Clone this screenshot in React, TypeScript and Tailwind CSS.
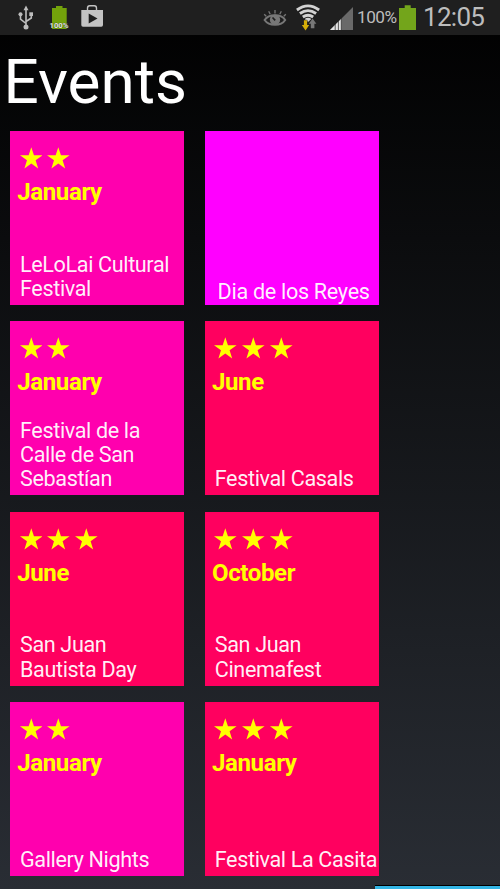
type EventTile = { title: string[]; month?: string; stars: number; color: string };

const PINK = "bg-[#ff00ae]";
const RED = "bg-[#ff005f]";

const events: EventTile[] = [
  { title: ["LeLoLai Cultural", "Festival"], month: "January", stars: 2, color: PINK },
  { title: ["Dia de los Reyes"], stars: 0, color: "bg-[#ff00ff]" },
  { title: ["Festival de la", "Calle de San", "Sebastían"], month: "January", stars: 2, color: PINK },
  { title: ["Festival Casals"], month: "June", stars: 3, color: RED },
  { title: ["San Juan", "Bautista Day"], month: "June", stars: 3, color: RED },
  { title: ["San Juan", "Cinemafest"], month: "October", stars: 3, color: RED },
  { title: ["Gallery Nights"], month: "January", stars: 2, color: PINK },
  { title: ["Festival La Casita"], month: "January", stars: 3, color: RED },
];

function Star() {
  return (
    <svg className="h-[22px] w-[22.6px]" viewBox="0 0 23 22" fill="#ffff00">
      <path d="M11.5 0 14.2 8.2H23L15.9 13.3 18.5 21.6 11.5 16.6 4.5 21.6 7.1 13.3 0 8.2H8.8Z" />
    </svg>
  );
}

function Tile({ event }: { event: EventTile }) {
  return (
    <div className={`flex h-[174.2px] w-[174.2px] flex-col ${event.color}`}>
      {event.month && (
        <>
          <div className="mt-[16px] flex h-[22px] gap-[5.2px] pl-[9.8px]">
            {Array.from({ length: event.stars }, (_, i) => (
              <Star key={i} />
            ))}
          </div>
          <div className="mt-[9px] pl-[7.4px] text-[24px] leading-[28px] font-bold tracking-[-0.35px] text-[#ffff00]">
            {event.month}
          </div>
        </>
      )}
      <div
        className={`mt-auto text-[21.6px] leading-[24.3px] whitespace-nowrap text-white/95 ${
          event.month ? "pb-[3.7px] pl-[10.2px] tracking-[-0.37px]" : "pb-[0.5px] pl-[13px] tracking-[-0.3px]"
        }`}
      >
        {event.title.map((line) => (
          <div key={line}>{line}</div>
        ))}
      </div>
    </div>
  );
}

function UsbIcon() {
  return (
    <svg className="h-[35px] w-[18px]" viewBox="17 0 18 35" fill="none" stroke="#bdbdbd" strokeWidth="1.6">
      <path d="M26 9V27M26 23.5 20.5 19V15M26 21.5 31.3 18V14" />
      <path d="M26 5.5 28.5 10.3H23.5Z" fill="#bdbdbd" stroke="none" />
      <circle cx="26" cy="27" r="2.5" fill="#bdbdbd" stroke="none" />
      <circle cx="20.5" cy="14.3" r="2" fill="#bdbdbd" stroke="none" />
      <path d="M29.3 12.3H33V16H29.3Z" fill="#bdbdbd" stroke="none" />
    </svg>
  );
}

function ChargeIcon() {
  return (
    <svg className="ml-[13px] h-[35px] w-[22px]" viewBox="48 0 22 35">
      <path d="M56 6H62.5V8H66.7V29H52V8H56Z" fill="#73a20b" />
      <text x="59" y="28" textAnchor="middle" textLength="19" lengthAdjust="spacingAndGlyphs" fill="#e4e4e4" fontSize="8" fontWeight="700" stroke="#29380b" strokeWidth=".5" paintOrder="stroke">
        100%
      </text>
    </svg>
  );
}

function StoreIcon() {
  return (
    <svg className="ml-[10px] h-[35px] w-[24px]" viewBox="80 0 24 35">
      <path d="M87.5 10V8.2Q87.5 5.7 89.7 5.7H94.3Q96.5 5.7 96.5 8.2V10" fill="none" stroke="#c3c3c3" strokeWidth="1.4" />
      <path d="M81.3 10H103V25Q103 26.7 101.3 26.7H83Q81.3 26.7 81.3 25Z" fill="#c3c3c3" />
      <path d="M88.7 13.5V23.5L97.5 18.5Z" fill="#1f1f1f" />
    </svg>
  );
}

function EyeIcon() {
  return (
    <svg className="h-[35px] w-[24px]" viewBox="263 0 24 35" fill="none" stroke="#777">
      <path d="M264.6 20C269 13.8 281 13.8 285.2 20C281 26.4 269 26.4 264.6 20Z" strokeWidth="2" />
      <circle cx="275" cy="19.8" r="5.2" fill="#777" stroke="none" />
      <path d="M275.2 20.3 272.5 17.5" stroke="#202020" strokeWidth="1.7" />
      <path d="M275 10V13.5M268.7 11.3 270.2 14.2M281.3 11.3 279.8 14.2M264.2 14.2 266.2 16.3M285.8 14.2 283.8 16.3" strokeWidth="1.3" />
    </svg>
  );
}

function WifiIcon() {
  return (
    <svg className="ml-[8px] h-[35px] w-[26px]" viewBox="295 0 26 35" fill="none" stroke="#d2d2d2" strokeWidth="2.8">
      <path d="M296.9 10Q308 1.8 319.1 10M299.9 13.5Q308 7.7 316.1 13.5M302.8 17Q308 13.4 313.2 17" />
      <path d="M304.6 19Q308 16.6 311.4 19L308 22Z" fill="#d2d2d2" stroke="none" />
      <path d="M303.9 20.3H307.1V25H309.2L305.5 30.5 301.8 25H303.9Z" fill="#d5ae09" stroke="#1f1f1f" strokeWidth=".8" paintOrder="stroke" />
      <path d="M310.8 28.3V23.8H308.8L312.6 18.5 316.4 23.8H314.4V28.3Z" fill="#777" stroke="#1f1f1f" strokeWidth=".8" paintOrder="stroke" />
    </svg>
  );
}

function SignalIcon() {
  return (
    <svg className="ml-[9px] h-[35px] w-[24px]" viewBox="330 0 24 35">
      <path d="M330 30 353 7V30Z" fill="#696969" />
      <path d="M330 30 341.3 18.7V30Z" fill="#e3e3e3" />
      <path d="M335.2 24V30M338.4 21V30M341.3 18V30" stroke="#333" strokeWidth=".8" />
    </svg>
  );
}

function BatteryIcon() {
  return (
    <svg className="ml-[2px] h-[35px] w-[19px]" viewBox="398 0 19 35">
      <path d="M404.7 5.3H410.7V8H416V30H399V8H404.7Z" fill="#73a51b" />
    </svg>
  );
}

function StatusBar() {
  return (
    <header className="flex h-[35px] shrink-0 items-center bg-[#1f1f1f] pr-[15px] pl-[17px]">
      <UsbIcon />
      <ChargeIcon />
      <StoreIcon />
      <div className="ml-auto flex items-center text-[#bdbdbd]">
        <EyeIcon />
        <WifiIcon />
        <SignalIcon />
        <span className="ml-[3px] w-[39px] pt-px text-[17.2px] tracking-[-0.5px]">100%</span>
        <BatteryIcon />
        <span className="ml-[6px] w-[62px] text-[26px] leading-[35px] tracking-[-0.7px]">12:05</span>
      </div>
    </header>
  );
}

export default function App() {
  return (
    <div className="flex h-[889px] w-[500px] flex-col overflow-hidden bg-linear-to-b/srgb from-black to-[#292d34] font-['Roboto',sans-serif]">
      <StatusBar />
      <h1 className="h-[96px] shrink-0 pt-[10px] pl-[3.5px] text-[62px] leading-[73px] text-white">Events</h1>
      <main className="grid shrink-0 grid-cols-[174.2px_174.2px] gap-x-[20.6px] gap-y-[16.1px] pl-[9.8px]">
        {events.map((event) => (
          <Tile key={event.title.join(" ")} event={event} />
        ))}
      </main>
      <div className="mt-auto ml-auto h-1 w-[125px] shrink-0 border-t border-black bg-[#33b5e5]" />
    </div>
  );
}
